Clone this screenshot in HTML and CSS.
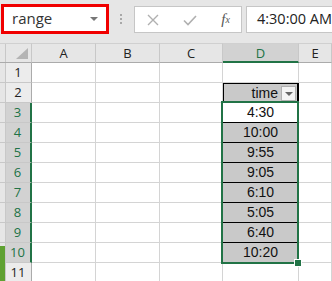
FILE: index.html
```html
<!DOCTYPE html>
<html lang="en">
<head>
    <meta charset="UTF-8">
    <title>range</title>
    <link rel="stylesheet" href="styles.css">
</head>
<body>
    <div class="formula-bar">
        <div class="namebox">
            <span>range</span>
            <span class="nb-arrow"></span>
        </div>
        <div class="grip"><i></i><i></i><i></i></div>
        <div class="fbuttons">
            <svg width="12" height="12" viewBox="0 0 12 12"><path d="M1 1 L11 11 M11 1 L1 11" stroke="#b0b0b0" stroke-width="1.4" fill="none"/></svg>
            <svg width="14" height="12" viewBox="0 0 14 12"><path d="M1 6.5 L5 10.5 L13 2" stroke="#b0b0b0" stroke-width="1.6" fill="none"/></svg>
            <span class="fx">f<sub>x</sub></span>
        </div>
        <div class="finput">4:30:00 AM</div>
    </div>

    <div class="sheet">
        <div class="ch corner"><span class="tri"></span></div>
        <div class="ch">A</div>
        <div class="ch">B</div>
        <div class="ch">C</div>
        <div class="ch sel">D</div>
        <div class="ch">E</div>

        <div class="rh">1</div><div class="c"></div><div class="c"></div><div class="c"></div><div class="c"></div><div class="c"></div>
        <div class="rh">2</div><div class="c"></div><div class="c"></div><div class="c"></div>
        <div class="c hdr"><span>time</span><span class="filter"></span></div><div class="c"></div>
        <div class="rh sel">3</div><div class="c"></div><div class="c"></div><div class="c"></div><div class="c val white">4:30</div><div class="c"></div>
        <div class="rh sel">4</div><div class="c"></div><div class="c"></div><div class="c"></div><div class="c val">10:00</div><div class="c"></div>
        <div class="rh sel">5</div><div class="c"></div><div class="c"></div><div class="c"></div><div class="c val">9:55</div><div class="c"></div>
        <div class="rh sel">6</div><div class="c"></div><div class="c"></div><div class="c"></div><div class="c val">9:05</div><div class="c"></div>
        <div class="rh sel">7</div><div class="c"></div><div class="c"></div><div class="c"></div><div class="c val">6:10</div><div class="c"></div>
        <div class="rh sel">8</div><div class="c"></div><div class="c"></div><div class="c"></div><div class="c val">5:05</div><div class="c"></div>
        <div class="rh sel">9</div><div class="c"></div><div class="c"></div><div class="c"></div><div class="c val">6:40</div><div class="c"></div>
        <div class="rh sel">10</div><div class="c"></div><div class="c"></div><div class="c"></div><div class="c val last">10:20</div><div class="c"></div>
        <div class="rh">11</div><div class="c"></div><div class="c"></div><div class="c"></div><div class="c"></div><div class="c"></div>

        <div class="selection"><span class="handle"></span></div>
        <div class="edge"></div>
    </div>
</body>
</html>
```

FILE: styles.css
```css
body {
    margin: 0;
    background-color: #e6e6e6;
    font-family: "Liberation Sans", Arial, sans-serif;
    width: 332px;
    height: 281px;
    overflow: hidden;
}
.formula-bar {
    height: 43px;
    box-sizing: border-box;
    display: flex;
    align-items: flex-start;
    padding-top: 4px;
    padding-left: 1px;
    background-color: #e6e6e6;
}
.namebox {
    width: 110px;
    height: 30px;
    box-sizing: border-box;
    border: 3px solid #f00000;
    background-color: white;
    display: flex;
    align-items: center;
    justify-content: space-between;
    padding: 0 8px 2px 8px;
    font-family: "Open Sans", sans-serif;
    font-size: 15px;
    color: #333;
}
.nb-arrow {
    width: 0;
    height: 0;
    border-left: 4px solid transparent;
    border-right: 4px solid transparent;
    border-top: 4px solid #777;
    margin-top: 2px;
}
.grip {
    width: 26px;
    display: flex;
    flex-direction: column;
    align-items: center;
    gap: 2px;
    padding-top: 10px;
}
.grip i {
    width: 2px;
    height: 2px;
    background-color: #a8a8a8;
}
.fbuttons {
    margin-top: 2px;
    width: 110px;
    height: 27px;
    box-sizing: border-box;
    border: 1px solid #c6c6c6;
    background-color: white;
    display: flex;
    align-items: center;
    justify-content: space-between;
    padding: 0 11px 0 12px;
}
.fx {
    font-family: "Liberation Serif", serif;
    font-style: italic;
    font-size: 15px;
    color: #555;
}
.fx sub {
    font-size: 10px;
    vertical-align: 1px;
}
.finput {
    margin-top: 2px;
    margin-left: 4px;
    flex: 1;
    height: 27px;
    box-sizing: border-box;
    border: 1px solid #c6c6c6;
    border-right: none;
    background-color: white;
    padding-left: 10px;
    font-family: "Open Sans", sans-serif;
    font-size: 14.5px;
    line-height: 24px;
    color: #222;
    white-space: nowrap;
}
.sheet {
    position: relative;
    display: grid;
    grid-template-columns: 32px 64px 64px 63px 76px 1fr;
    grid-template-rows: 20px;
    grid-auto-rows: 20px;
    background-color: white;
}
.ch {
    box-sizing: border-box;
    background-color: #e6e6e6;
    border-right: 1px solid #c8c8c8;
    border-bottom: 1px solid #ababab;
    border-top: 1px solid #d0d0d0;
    font-family: "Open Sans", sans-serif;
    font-size: 13px;
    color: #222;
    text-align: center;
    line-height: 18px;
}
.ch.sel {
    background-color: #d2d2d2;
    color: #217346;
    border-bottom: 2px solid #217346;
}
.corner {
    position: relative;
    background: linear-gradient(to right, #e6e6e6 5px, #c8c8c8 5px, #c8c8c8 6px, #e6e6e6 6px);
}
.tri {
    position: absolute;
    right: 3px;
    bottom: 3px;
    width: 0;
    height: 0;
    border-left: 12px solid transparent;
    border-bottom: 11px solid #b4b4b4;
}
.rh {
    box-sizing: border-box;
    background: linear-gradient(to right, #e6e6e6 5px, #c8c8c8 5px, #c8c8c8 6px, #ececec 6px);
    border-right: 1px solid #ababab;
    border-bottom: 1px solid #c8c8c8;
    padding-left: 5px;
    font-family: "Open Sans", sans-serif;
    font-size: 13px;
    color: #222;
    text-align: center;
    line-height: 19px;
}
.rh.sel {
    background: linear-gradient(to right, #e6e6e6 5px, #c8c8c8 5px, #c8c8c8 6px, #d2d2d2 6px);
    color: #217346;
    border-right: 2px solid #217346;
}
.c {
    box-sizing: border-box;
    border-right: 1px solid #d4d4d4;
    border-bottom: 1px solid #d4d4d4;
}
.hdr {
    background-color: #c9c9c9;
    border: 1px solid #000;
    border-right: 2px solid #000;
    display: flex;
    align-items: center;
    justify-content: flex-end;
    gap: 3px;
    padding-right: 1px;
    font-size: 14px;
    color: #111;
}
.filter {
    width: 15px;
    height: 15px;
    box-sizing: border-box;
    border: 1px solid #b0b0b0;
    background-color: #f4f4f4;
    position: relative;
}
.filter::after {
    content: "";
    position: absolute;
    left: 3px;
    top: 5px;
    border-left: 4px solid transparent;
    border-right: 4px solid transparent;
    border-top: 4px solid #666;
}
.val {
    background-color: #c9c9c9;
    border-bottom: 1px solid #000;
    border-right: 2px solid #d4d4d4;
    text-align: center;
    font-size: 14px;
    line-height: 19px;
    color: #111;
    padding-left: 1px;
}
.val.white {
    background-color: white;
}
.val.last {
    border-bottom-color: #d4d4d4;
}
.selection {
    position: absolute;
    left: 221px;
    top: 58px;
    width: 78px;
    height: 163px;
    border: 2px solid #217346;
    box-sizing: border-box;
}
.handle {
    position: absolute;
    right: -5px;
    bottom: -5px;
    width: 6px;
    height: 6px;
    background-color: #217346;
    border: 1px solid white;
}
.edge {
    position: absolute;
    left: 0;
    top: 203px;
    width: 5px;
    height: 40px;
    background-color: #5fa132;
}
```
